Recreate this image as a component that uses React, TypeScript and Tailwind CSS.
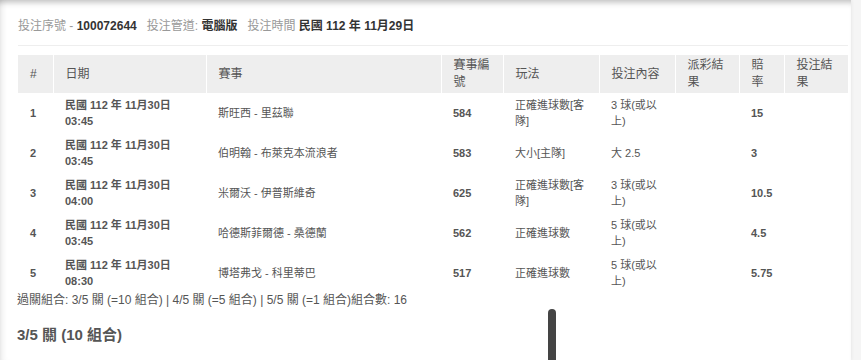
import React from "react";

const FONT = '"Liberation Sans", Arial, "Noto Sans CJK TC", sans-serif';

type Row = {
  n: string;
  date: string;
  time: string;
  match: string;
  id: string;
  play: string;
  content: string;
  odds: string;
};

const rows: Row[] = [
  { n: "1", date: "民國 112 年 11月30日", time: "03:45", match: "斯旺西 - 里茲聯", id: "584", play: "正確進球數[客隊]", content: "3 球(或以上)", odds: "15" },
  { n: "2", date: "民國 112 年 11月30日", time: "03:45", match: "伯明翰 - 布萊克本流浪者", id: "583", play: "大小[主隊]", content: "大 2.5", odds: "3" },
  { n: "3", date: "民國 112 年 11月30日", time: "04:00", match: "米爾沃 - 伊普斯維奇", id: "625", play: "正確進球數[客隊]", content: "3 球(或以上)", odds: "10.5" },
  { n: "4", date: "民國 112 年 11月30日", time: "03:45", match: "哈德斯菲爾德 - 桑德蘭", id: "562", play: "正確進球數", content: "5 球(或以上)", odds: "4.5" },
  { n: "5", date: "民國 112 年 11月30日", time: "08:30", match: "博塔弗戈 - 科里蒂巴", id: "517", play: "正確進球數", content: "5 球(或以上)", odds: "5.75" },
];

const headers = ["#", "日期", "賽事", "賽事編號", "玩法", "投注內容", "派彩結果", "賠率", "投注結果"];
const widths = ["w-[35px]", "w-[153px]", "w-[235px]", "w-[62px]", "w-[96px]", "w-[76px]", "w-[64px]", "w-[45px]", "w-[64px]"];

export default function App() {
  return (
    <div
      className="relative w-[861px] h-[360px] overflow-hidden bg-[#f5f5f5]"
      style={{ fontFamily: FONT }}
    >
      <div className="relative w-[851px] h-[360px] bg-white shadow-[inset_0_7px_6px_-5px_rgba(0,0,0,0.28),inset_7px_0_7px_-6px_rgba(0,0,0,0.12),1px_0_3px_rgba(0,0,0,0.05)] pt-[18px] pl-[18px] pr-[3px]">
        <div className="text-[12px] leading-4 pb-[11px] border-b border-[#eeeeee] text-[#999999] whitespace-nowrap">
          <span>
            投注序號 - <b className="text-[#333333] font-bold">100072644</b>
          </span>
          <span className="ml-[10px]">
            投注管道: <b className="text-[#333333] font-bold">電腦版</b>
          </span>
          <span className="ml-[10px]">
            投注時間 <b className="text-[#333333] font-bold">民國 112 年 11月29日</b>
          </span>
        </div>

        <table className="mt-[9px] w-[830px] table-fixed border-collapse">
          <colgroup>
            {widths.map((w, i) => (
              <col key={i} className={w} />
            ))}
          </colgroup>
          <thead>
            <tr className="bg-[#eeeeee] h-[38px]">
              {headers.map((h, i) => (
                <th
                  key={i}
                  className={`text-left align-middle font-normal text-[12px] leading-[17px] text-[#555555] px-3 py-[2px] ${
                    i < headers.length - 1 ? "border-r border-white" : ""
                  }`}
                >
                  {h}
                </th>
              ))}
            </tr>
          </thead>
          <tbody className="text-[11px] leading-4 text-[#555555]">
            {rows.map((r) => (
              <tr key={r.n} className="h-[40px]">
                <td className="px-3 py-1 align-middle font-bold">{r.n}</td>
                <td className="px-3 py-1 align-middle font-bold">
                  {r.date}
                  <br />
                  {r.time}
                </td>
                <td className="px-3 py-1 align-middle">{r.match}</td>
                <td className="px-3 py-1 align-middle font-bold">{r.id}</td>
                <td className="px-3 py-1 align-middle">{r.play}</td>
                <td className="px-3 py-1 align-middle">{r.content}</td>
                <td className="px-3 py-1 align-middle"></td>
                <td className="px-3 py-1 align-middle font-bold">{r.odds}</td>
                <td className="px-3 py-1 align-middle"></td>
              </tr>
            ))}
          </tbody>
        </table>

        <div className="-ml-px text-[12px] leading-[14px] text-[#555555] whitespace-nowrap">
          過關組合: 3/5 關 (=10 組合) | 4/5 關 (=5 組合) | 5/5 關 (=1 組合)組合數: 16
        </div>
        <div className="-ml-px mt-[18px] text-[15px] leading-5 font-bold text-[#555555]">
          3/5 關 (10 組合)
        </div>
      </div>
      <div className="absolute left-[548px] top-[309px] w-[8px] h-[60px] rounded-t-full bg-[#444444]" />
    </div>
  );
}
